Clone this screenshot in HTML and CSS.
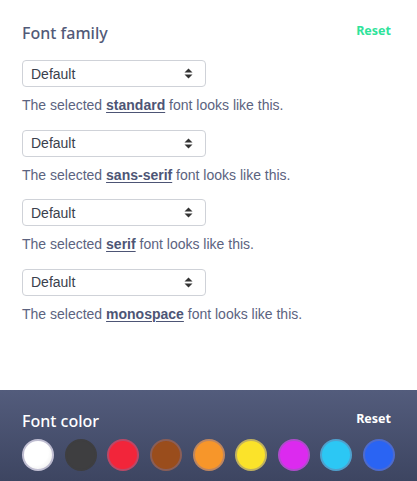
FILE: index.html
```html
<!DOCTYPE html>
<html>
<head>
<meta charset="utf-8">
<link rel="stylesheet" href="styles.css">
</head>
<body>
<section class="family">
  <div class="head">
    <h2 class="title">Font family</h2>
    <a class="reset">Reset</a>
  </div>
  <div class="group">
    <div class="select"><span>Default</span>
      <svg class="arrows" width="9" height="11" viewBox="0 0 9 11"><path d="M4.5 0.5 L8.5 4.5 H0.5 Z M4.5 10.5 L8.5 6.5 H0.5 Z" fill="#333"/></svg>
    </div>
    <p class="desc">The selected <b>standard</b> font looks like this.</p>
  </div>
  <div class="group">
    <div class="select"><span>Default</span>
      <svg class="arrows" width="9" height="11" viewBox="0 0 9 11"><path d="M4.5 0.5 L8.5 4.5 H0.5 Z M4.5 10.5 L8.5 6.5 H0.5 Z" fill="#333"/></svg>
    </div>
    <p class="desc">The selected <b>sans-serif</b> font looks like this.</p>
  </div>
  <div class="group">
    <div class="select"><span>Default</span>
      <svg class="arrows" width="9" height="11" viewBox="0 0 9 11"><path d="M4.5 0.5 L8.5 4.5 H0.5 Z M4.5 10.5 L8.5 6.5 H0.5 Z" fill="#333"/></svg>
    </div>
    <p class="desc">The selected <b>serif</b> font looks like this.</p>
  </div>
  <div class="group">
    <div class="select"><span>Default</span>
      <svg class="arrows" width="9" height="11" viewBox="0 0 9 11"><path d="M4.5 0.5 L8.5 4.5 H0.5 Z M4.5 10.5 L8.5 6.5 H0.5 Z" fill="#333"/></svg>
    </div>
    <p class="desc">The selected <b>monospace</b> font looks like this.</p>
  </div>
</section>
<section class="color">
  <div class="head">
    <h2 class="title light">Font color</h2>
    <a class="reset white">Reset</a>
  </div>
  <div class="swatches">
    <span class="sw white-sw"></span>
    <span class="sw dark-sw"></span>
    <span class="sw red"></span>
    <span class="sw brown"></span>
    <span class="sw orange"></span>
    <span class="sw yellow"></span>
    <span class="sw magenta"></span>
    <span class="sw cyan"></span>
    <span class="sw blue"></span>
  </div>
</section>
</body>
</html>
```
FILE: styles.css
```css
* { box-sizing: border-box; }
html, body { margin: 0; padding: 0; background: #fff; }
body { width: 417px; height: 481px; overflow: hidden; font-family: "Liberation Sans", Arial, sans-serif; }

.family {
  height: 390px;
  padding: 21px 26px 0 22px;
}
.head {
  display: flex;
  justify-content: space-between;
  align-items: flex-start;
}
.title {
  margin: 0;
  font-family: "Noto Sans", sans-serif;
  font-weight: 500;
  font-size: 16px;
  line-height: 24px;
  color: #525a78;
}
.reset {
  font-family: "Noto Sans", sans-serif;
  font-weight: 700;
  font-size: 12.5px;
  line-height: 18px;
  color: #2fe39b;
  margin-top: 1px;
}
.family .head { margin-bottom: 15px; }

.group { margin-bottom: 14.5px; }
.select {
  width: 184px;
  height: 27px;
  border: 1px solid #cfd2d8;
  border-radius: 4px;
  display: flex;
  align-items: center;
  justify-content: space-between;
  padding: 0 12px 0 8px;
  font-size: 14px;
  color: #3a3f4d;
}
.arrows { display: block; }
.desc {
  margin: 9px 0 0;
  font-size: 14px;
  line-height: 19px;
  color: #5b6380;
}
.desc b { color: #4d5575; text-decoration: underline; text-underline-offset: 2px; }

.color {
  height: 91px;
  background: linear-gradient(#535c7c, #3d4561);
  padding: 19px 26px 0 22px;
}
.title.light { color: #fff; }
.reset.white { color: #fff; }
.color .head { margin-bottom: 6px; }
.swatches {
  display: flex;
  justify-content: space-between;
  margin-right: -4px;
}
.sw {
  width: 32px;
  height: 32px;
  border-radius: 50%;
  border: 2px solid rgba(120, 115, 160, 0.45);
}
.white-sw { background: radial-gradient(circle at 40% 40%, #fff 55%, #e6e6e6); }
.dark-sw { background: #3e3e40; border-color: #3e3e40; }
.red { background: #f2253a; }
.brown { background: #9a4d1c; }
.orange { background: #f7962a; }
.yellow { background: #fbe32a; }
.magenta { background: #dc2aef; }
.cyan { background: #2cc7f4; }
.blue { background: #2a64f3; }
```
